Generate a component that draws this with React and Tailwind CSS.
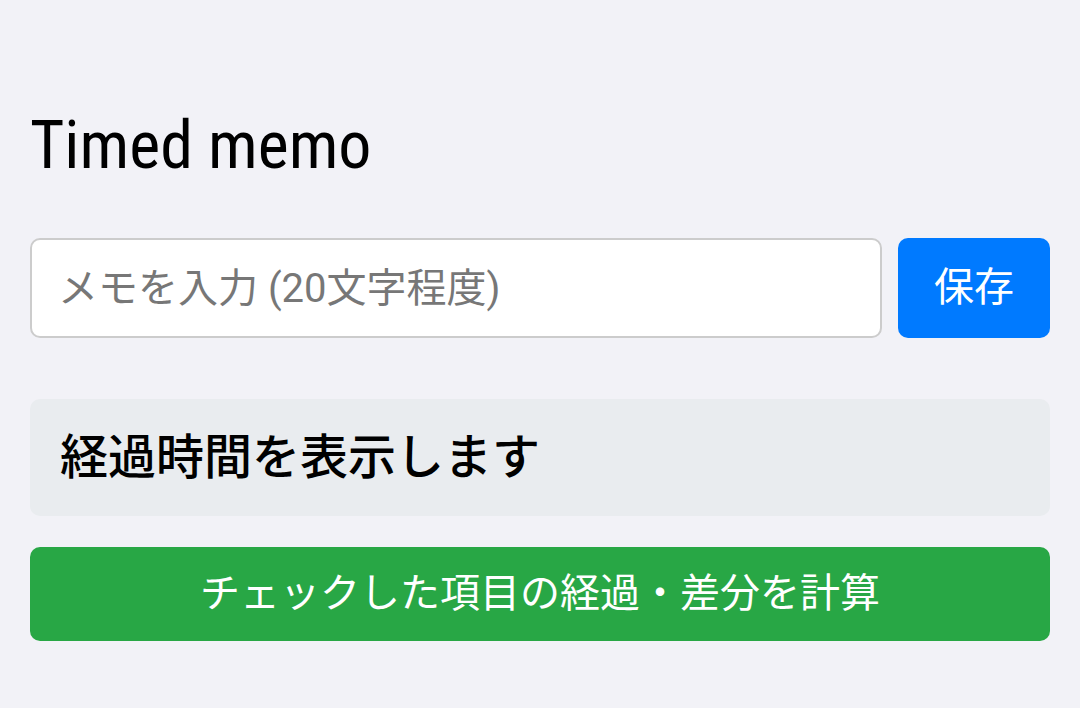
import { useState } from 'react';

const App = () => {
  const [memo, setMemo] = useState('');

  return (
    <div className="min-h-[708px] bg-[#f2f2f7] px-[30px] pt-[108px] font-['Roboto','Noto_Sans_CJK_JP',sans-serif]">
      <h1 className="mb-[54px] font-['Roboto_Condensed','Noto_Sans_CJK_JP',sans-serif] text-[66px] font-normal leading-[76px] text-black">
        Timed memo
      </h1>

      <div className="flex gap-4">
        <input
          type="text"
          value={memo}
          onChange={(e) => setMemo(e.target.value)}
          placeholder="メモを入力 (20文字程度)"
          className="h-[100px] flex-1 rounded-[10px] border-2 border-[#cccccc] bg-white px-[26px] text-[40px] text-black outline-none placeholder:text-[#777777]"
        />
        <button className="h-[100px] w-[152px] rounded-[10px] bg-[#007aff] text-[40px] text-white">
          保存
        </button>
      </div>

      <div className="mt-[61px] flex h-[117px] items-center rounded-[10px] bg-[#e9ecef] px-[30px]">
        <p className="text-[48px] font-medium text-black">経過時間を表示します</p>
      </div>

      <button className="mt-[31px] h-[94px] w-full rounded-[10px] bg-[#28a745] text-[40px] text-white">
        チェックした項目の経過・差分を計算
      </button>
    </div>
  );
};

export default App;
